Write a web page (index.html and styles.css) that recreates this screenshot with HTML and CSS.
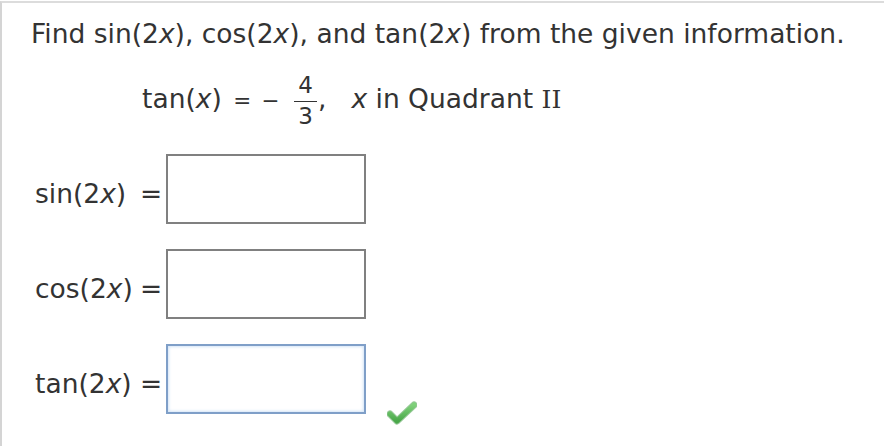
FILE: index.html
```html
<!DOCTYPE html>
<html>
<head>
<meta charset="utf-8">
<link rel="stylesheet" href="styles.css">
</head>
<body>
<div class="panel">
  <p class="prompt">Find sin(2<i>x</i>), cos(2<i>x</i>), and tan(2<i>x</i>) from the given information.</p>
  <div class="given"><span class="fn">tan(<i>x</i>)</span><span class="eq">=</span><span class="minus">−</span><span class="frac"><span class="num">4</span><span class="den">3</span></span><span class="comma">,</span><span class="cond"><i>x</i> in Quadrant <span class="roman">II</span></span></div>
  <div class="answers">
    <span class="label">sin(2<i>x</i>)</span><span class="equals">=</span><span class="box"></span><span></span>
    <span class="label">cos(2<i>x</i>)</span><span class="equals">=</span><span class="box"></span><span></span>
    <span class="label">tan(2<i>x</i>)</span><span class="equals">=</span><span class="box focus"></span>
    <span class="check"><svg width="30" height="25" viewBox="0 0 30 25"><defs><linearGradient id="g" x1="0" y1="0" x2="0" y2="1"><stop offset="0" stop-color="#7fd07a"/><stop offset="1" stop-color="#4aa84a"/></linearGradient></defs><path d="M3 14 L10 21 L27 5" fill="none" stroke="#3f9a42" stroke-width="7" stroke-linecap="round" stroke-linejoin="round" opacity="0.55"/><path d="M3 14 L10 21 L27 5" fill="none" stroke="url(#g)" stroke-width="5" stroke-linecap="round" stroke-linejoin="round"/></svg></span>
  </div>
</div>
</body>
</html>
```

FILE: styles.css
```css
html, body {
  margin: 0;
  padding: 0;
  background: #fff;
}
body {
  width: 884px;
  height: 448px;
  overflow: hidden;
  font-family: "DejaVu Sans", Verdana, sans-serif;
  color: #333;
}
.panel {
  margin-top: 1px;
  height: 445px;
  border-top: 2px solid #dcdcdc;
  border-left: 2px solid #d4d4d4;
  box-sizing: border-box;
}
i {
  font-style: italic;
}
.prompt {
  margin: 0;
  padding: 16px 0 0 29px;
  font-size: 26.5px;
  line-height: 30px;
  white-space: nowrap;
}
.given {
  margin-top: 35px;
  height: 30px;
  padding-left: 140px;
  display: flex;
  align-items: baseline;
  font-size: 26.5px;
  line-height: 30px;
  white-space: nowrap;
}
.eq,
.minus {
  font-size: 21.5px;
}
.eq {
  margin-left: 11.5px;
}
.minus {
  margin-left: 10px;
}
.frac {
  align-self: flex-start;
  display: flex;
  flex-direction: column;
  margin-top: -10px;
  margin-left: 15px;
  text-align: center;
  font-size: 23px;
  line-height: 23px;
}
.num {
  padding: 0 4px 4px;
  border-bottom: 1.5px solid #333;
}
.den {
  padding-top: 3px;
}
.comma {
  margin-left: 1px;
}
.cond {
  margin-left: 25px;
}
.roman {
  font-family: "DejaVu Serif", serif;
  font-size: 25px;
}
.answers {
  margin-top: 40px;
  padding-left: 33px;
  display: grid;
  grid-template-columns: 105px 26px 200px auto;
  grid-auto-rows: 70px;
  row-gap: 25px;
  font-size: 26.5px;
  line-height: 30px;
}
.label,
.equals {
  align-self: start;
  padding-top: 25px;
  white-space: nowrap;
}
.box {
  border: 2px solid #808080;
  box-sizing: border-box;
  background: #fff;
}
.box.focus {
  border-color: #7f9fc8;
  box-shadow: inset 0 0 3px 1px #d3e4f7;
}
.check {
  align-self: end;
  margin: 0 0 -11px 21px;
  line-height: 0;
}
```
